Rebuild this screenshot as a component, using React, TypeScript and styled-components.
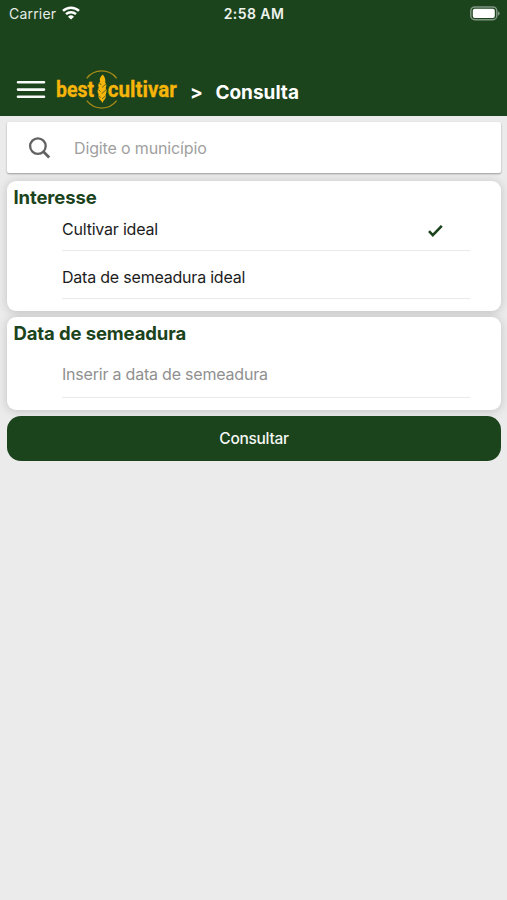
import React from "react";
import styled, { createGlobalStyle } from "styled-components";

const GREEN = "#1b431c";

const GlobalStyle = createGlobalStyle`
  * { box-sizing: border-box; }
  body {
    margin: 0;
    background: #ebebeb;
    font-family: Inter, "Liberation Sans", sans-serif;
  }
`;

const Screen = styled.div`
  width: 100%;
  min-height: 900px;
  background: #ebebeb;
`;

const Header = styled.header`
  height: 115.5px;
  background: ${GREEN};
  color: #fff;
`;

const StatusBar = styled.div`
  height: 28px;
  display: grid;
  grid-template-columns: 1fr auto 1fr;
  align-items: center;
  padding: 0 7px 2px 9px;
`;

const Carrier = styled.div`
  display: flex;
  align-items: center;
  gap: 6px;
  font-size: 14px;
  letter-spacing: 0.2px;
  color: #e6ece6;
`;

const Clock = styled.div`
  font-size: 14px;
  font-weight: 600;
  letter-spacing: 0.45px;
  margin-right: 1px;
  color: #eef3ee;
`;

const Battery = styled.svg`
  justify-self: end;
  display: block;
`;

const NavBar = styled.div`
  height: 87px;
  display: flex;
  padding-left: 16px;
`;

const MenuButton = styled.button`
  width: 30px;
  height: 20px;
  margin-top: 52px;
  padding: 0;
  border: 0;
  background: none;
`;

const Logo = styled.svg`
  display: block;
  overflow: visible;
  margin: 40px 0 0 9px;
`;

const Crumb = styled.div<{ $left: number }>`
  margin: 52px 0 0 ${(p) => p.$left}px;
  font-size: 19px;
  line-height: 25px;
  font-weight: 700;
`;

const Content = styled.main`
  display: flex;
  flex-direction: column;
  padding: 6.5px 6px 0 7px;
`;

const SearchBox = styled.label`
  height: 51px;
  display: flex;
  align-items: center;
  padding-left: 20px;
  background: #fff;
  border-radius: 2px;
  box-shadow: 0 1px 2px rgba(0, 0, 0, 0.35);
`;

const SearchText = styled.span`
  margin-left: 22px;
  font-size: 16px;
  letter-spacing: -0.14px;
  color: #a0a0a0;
`;

const Card = styled.section<{ $height: number; $gap: number }>`
  height: ${(p) => p.$height}px;
  margin-top: ${(p) => p.$gap}px;
  padding: 4px 31px 0 6.5px;
  background: #fff;
  border-radius: 9px;
  box-shadow: 0 1px 10px rgba(0, 0, 0, 0.18);
`;

const CardTitle = styled.h2`
  margin: 0;
  font-size: 18.5px;
  line-height: 24px;
  font-weight: 700;
  letter-spacing: -0.12px;
  color: ${GREEN};
`;

const Row = styled.div<{ $height: number; $pad: number; $muted?: boolean }>`
  height: ${(p) => p.$height}px;
  margin-left: 48.5px;
  padding: 0 26px ${(p) => p.$pad}px 0;
  display: flex;
  align-items: flex-end;
  justify-content: space-between;
  border-bottom: 1px solid #e9e9e9;
  font-size: 16px;
  line-height: 20px;
  letter-spacing: -0.21px;
  color: ${(p) => (p.$muted ? "#909090" : "#1c1c1c")};
`;

const Submit = styled.button`
  height: 44.5px;
  margin-top: 6px;
  padding: 0;
  border: 0;
  border-radius: 14px;
  background: ${GREEN};
  color: #f4f7f4;
  font: 500 15.5px Inter, "Liberation Sans", sans-serif;
  letter-spacing: -0.3px;
`;

export default function App() {
  return (
    <Screen>
      <GlobalStyle />
      <Header>
        <StatusBar>
          <Carrier>
            Carrier
            <svg width="18" height="14" viewBox="0 0 18 14" fill="none" stroke="#fff">
              <path d="M1 4.9a11.5 11.5 0 0 1 16 0" strokeWidth="2.5" />
              <path d="M4 8.2a7.2 7.2 0 0 1 10 0" strokeWidth="2.4" />
              <path d="M9 13.6 6 10.7a4.4 4.4 0 0 1 6 0z" fill="#fff" stroke="none" />
            </svg>
          </Carrier>
          <Clock>2:58 AM</Clock>
          <Battery width="30" height="15" viewBox="0 0 30 15">
            <rect x="0.8" y="0.9" width="26" height="12.8" rx="4" fill="none" stroke="#809782" strokeWidth="1.5" />
            <rect x="2.8" y="2.7" width="22" height="9.2" rx="2" fill="#fff" />
            <path d="M28 5.2c2.2.8 2.2 3.6 0 4.4z" fill="#809782" />
          </Battery>
        </StatusBar>
        <NavBar>
          <MenuButton aria-label="Menu">
            <svg width="30" height="20" viewBox="0 0 30 20" stroke="#f8faf8" strokeWidth="2.6" strokeLinecap="round">
              <path d="M2 2.3h26M2 9.6h26M2 16.8h26" />
            </svg>
          </MenuButton>
          <Logo width="124" height="42" viewBox="0 0 124 42" fill="#f5b50a">
            <path d="M31.7 10.3a19 19 0 0 1 30 0M31.7 32.7a19 19 0 0 0 30 0" fill="none" stroke="#a58a17" strokeWidth="1.3" />
            <g fontFamily="Roboto, sans-serif" fontWeight="700" fontSize="22.5" stroke="#f5b50a" strokeWidth=".3">
              <text x="1" y="28.8" textLength="38" lengthAdjust="spacingAndGlyphs">best</text>
              <text x="52.8" y="28.8" textLength="69" lengthAdjust="spacingAndGlyphs">cultivar</text>
            </g>
            <path d="M47.8 6.5c-2.6 2.3-3.8 4.6-2.6 7-1.9 2-2.6 4.1-1.4 6.3-1.6 2.1-1.6 4.2-.3 6.2-.6 2.8.4 5.2 3 7.2l1 1.8.8-2c2.2-2 3.2-4.2 2.3-6.7 1.4-2.1 1.3-4.2.1-6.2 1.1-2.2.8-4.1-.6-5.8.8-2.6-.2-5-2.3-7.8z" />
            <path d="M47 19.5l4-3.6M46.7 25.6l4.4-3.8M47 31l3.5-3.2M44.6 15l1.5 2M43.4 21.5l2 2M43.6 28l2 1.6" fill="none" stroke="#54601a" strokeWidth=".9" />
          </Logo>
          <Crumb $left={11}>&gt;</Crumb>
          <Crumb $left={12.5}>Consulta</Crumb>
        </NavBar>
      </Header>
      <Content>
        <SearchBox>
          <svg width="25" height="25" viewBox="0 0 25 25" fill="none" stroke="#626262">
            <circle cx="10.9" cy="11.1" r="7.8" strokeWidth="2.3" />
            <path d="m16.5 16.7 5.7 5.7" strokeWidth="2.8" />
          </svg>
          <SearchText>Digite o município</SearchText>
        </SearchBox>
        <Card $height={130} $gap={7.5}>
          <CardTitle>Interesse</CardTitle>
          <Row $height={42} $pad={11}>
            <span>Cultivar ideal</span>
            <svg width="17" height="17" viewBox="0 0 17 17" fill="none" stroke={GREEN} strokeWidth="2.6">
              <path d="m2 9.2 3.8 3.9 9-9.3" />
            </svg>
          </Row>
          <Row $height={48} $pad={11}>
            <span>Data de semeadura ideal</span>
          </Row>
        </Card>
        <Card $height={93} $gap={6.5}>
          <CardTitle>Data de semeadura</CardTitle>
          <Row $height={53} $pad={13} $muted>
            <span>Inserir a data de semeadura</span>
          </Row>
        </Card>
        <Submit>Consultar</Submit>
      </Content>
    </Screen>
  );
}
